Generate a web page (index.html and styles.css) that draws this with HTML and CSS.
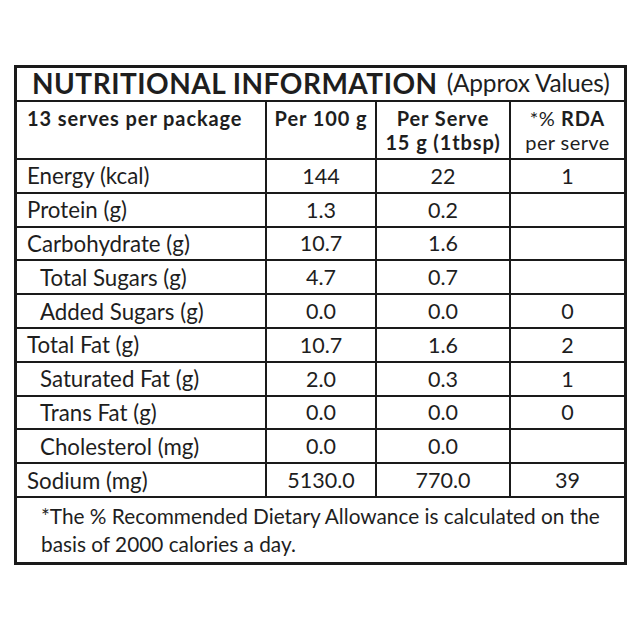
FILE: index.html
```html
<!DOCTYPE html>
<html lang="en">
<head>
<meta charset="utf-8">
<title>Nutritional Information</title>
<link rel="stylesheet" href="styles.css">
</head>
<body>
<div class="panel">
  <div class="title"><b>NUTRITIONAL INFORMATION</b> <span class="approx">(Approx Values)</span></div>

  <div class="head head-left">13 serves per package</div>
  <div class="head">Per 100 g</div>
  <div class="head">Per Serve<br>15 g (1tbsp)</div>
  <div class="head"><span class="light">*%</span> RDA<br><span class="light">per serve</span></div>

  <div class="label">Energy (kcal)</div><div class="val">144</div><div class="val">22</div><div class="val">1</div>
  <div class="label">Protein (g)</div><div class="val">1.3</div><div class="val">0.2</div><div class="val"></div>
  <div class="label">Carbohydrate (g)</div><div class="val">10.7</div><div class="val">1.6</div><div class="val"></div>
  <div class="label sub">Total Sugars (g)</div><div class="val">4.7</div><div class="val">0.7</div><div class="val"></div>
  <div class="label sub">Added Sugars (g)</div><div class="val">0.0</div><div class="val">0.0</div><div class="val">0</div>
  <div class="label">Total Fat (g)</div><div class="val">10.7</div><div class="val">1.6</div><div class="val">2</div>
  <div class="label sub">Saturated Fat (g)</div><div class="val">2.0</div><div class="val">0.3</div><div class="val">1</div>
  <div class="label sub">Trans Fat (g)</div><div class="val">0.0</div><div class="val">0.0</div><div class="val">0</div>
  <div class="label sub">Cholesterol (mg)</div><div class="val">0.0</div><div class="val">0.0</div><div class="val"></div>
  <div class="label">Sodium (mg)</div><div class="val">5130.0</div><div class="val">770.0</div><div class="val">39</div>

  <div class="note">*The % Recommended Dietary Allowance is calculated on the basis of 2000 calories a day.</div>
</div>
</body>
</html>
```
FILE: styles.css
```css
html, body {
  margin: 0;
  padding: 0;
  background: #ffffff;
}

body {
  font-family: Lato, "Open Sans", sans-serif;
  color: #1e1e1e;
}

.panel {
  display: grid;
  grid-template-columns: 248px 108px 132px 113px;
  grid-template-rows: 32px 56px repeat(10, 31.8px) 64px;
  gap: 2px;
  padding: 3px;
  background: #1a1a1a;
  width: max-content;
  margin: 65px 0 0 14px;
}

.panel > div {
  background: #ffffff;
}

.title {
  grid-column: 1 / -1;
  display: flex;
  align-items: center;
  padding: 0 0 3px 15px;
  font-size: 28px;
  white-space: nowrap;
}

.title b {
  font-weight: 700;
  letter-spacing: 0.5px;
}

.approx {
  font-weight: 400;
  margin-left: 9px;
  font-size: 24.5px;
  letter-spacing: -0.2px;
}

.head {
  font-size: 20px;
  font-weight: 700;
  text-align: center;
  line-height: 24px;
  padding-top: 4px;
  letter-spacing: 0.9px;
  white-space: nowrap;
}

.head-left {
  text-align: left;
  padding-left: 10px;
}

.light {
  font-weight: 400;
  letter-spacing: 0.4px;
}

.label,
.val {
  display: flex;
  align-items: center;
  font-size: 22.3px;
}

.label {
  padding-left: 10px;
}

.label.sub {
  padding-left: 23px;
}

.val {
  justify-content: center;
  font-size: 21.5px;
}

.note {
  grid-column: 1 / -1;
  font-size: 20.8px;
  line-height: 28px;
  padding: 4px 16px 0 24px;
}
```
